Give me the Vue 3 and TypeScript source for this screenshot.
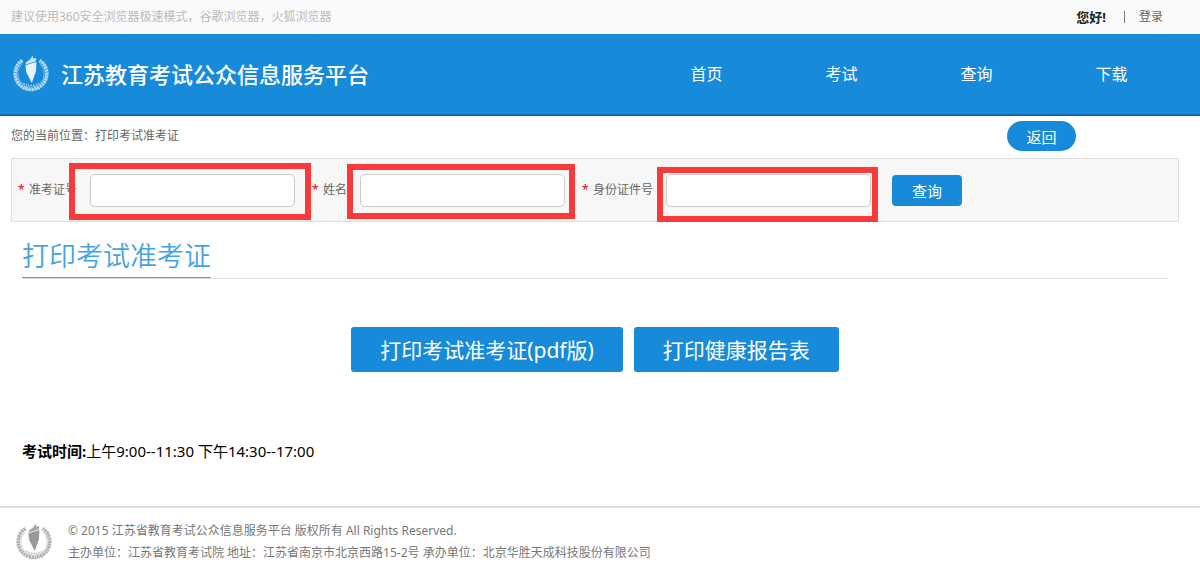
<script setup lang="ts">
import { reactive } from 'vue'

interface Field {
  id: 'ticket' | 'name' | 'idcard'
  label: string
}

const navItems: string[] = ['首页', '考试', '查询', '下载']

const fields: Field[] = [
  { id: 'ticket', label: '准考证号' },
  { id: 'name', label: '姓名' },
  { id: 'idcard', label: '身份证件号' },
]

const form = reactive({ ticket: '', name: '', idcard: '' })
</script>

<template>
  <div class="page">
    <svg class="defs" aria-hidden="true">
      <symbol id="emblem" viewBox="0 0 36 38">
        <g fill="none" stroke="currentColor">
          <path d="M9.4 5.4A15.8 15.8 0 1 0 26.6 5.4" stroke-width="3.6" stroke-dasharray="2.4 0.5" opacity="0.75" />
          <path d="M9.6 8.8A13.2 13.2 0 1 0 26.4 8.8" stroke-width="0.8" opacity="0.6" />
          <path d="M10.5 28.3Q18 32.6 25.5 28.3" stroke-width="1.3" stroke-dasharray="1.2 1.3" opacity="0.8" />
        </g>
        <path d="M12.8 7.4L17 4.6L19.6 0.4L20.2 3.4L23.4 3L22.6 6.6L12.8 9.6Z" fill="currentColor" opacity="0.85" />
        <path d="M12.4 10.2L23.4 7L23 16L18.8 28L13.2 17Z" fill="currentColor" />
        <path d="M14.6 12.4L16.4 16.2L17.6 22" fill="none" stroke="currentColor" stroke-width="0.6" opacity="0.5" />
      </symbol>
    </svg>

    <div class="topbar">
      <span class="notice">建议使用360安全浏览器极速模式，谷歌浏览器，火狐浏览器</span>
      <div class="account">
        <strong>您好!</strong>
        <span class="divider"></span>
        <a href="#">登录</a>
      </div>
    </div>

    <header class="header">
      <a class="brand" href="#">
        <svg class="emblem"><use href="#emblem" /></svg>
        <span>江苏教育考试公众信息服务平台</span>
      </a>
      <nav class="nav">
        <a v-for="item in navItems" :key="item" href="#">{{ item }}</a>
      </nav>
    </header>

    <main>
      <div class="location">
        <span>您的当前位置：打印考试准考证</span>
        <button type="button" class="back">返回</button>
      </div>

      <form class="search" @submit.prevent>
        <div v-for="field in fields" :key="field.id" class="field">
          <label :for="field.id"><span class="required">*</span>{{ field.label }}</label>
          <div class="control">
            <input :id="field.id" v-model="form[field.id]" type="text" />
            <span class="mark" :class="`mark-${field.id}`"></span>
          </div>
        </div>
        <button type="submit" class="query">查询</button>
      </form>

      <section class="content">
        <div class="heading">
          <h1>打印考试准考证</h1>
        </div>
        <div class="actions">
          <button type="button">打印考试准考证(pdf版)</button>
          <button type="button">打印健康报告表</button>
        </div>
        <p class="time"><strong>考试时间:</strong>上午9:00--11:30 下午14:30--17:00</p>
      </section>
    </main>

    <footer class="footer">
      <svg class="emblem"><use href="#emblem" /></svg>
      <div>
        <p>© 2015 江苏省教育考试公众信息服务平台 版权所有 All Rights Reserved.</p>
        <p>主办单位：江苏省教育考试院 地址：江苏省南京市北京西路15-2号 承办单位：北京华胜天成科技股份有限公司</p>
      </div>
    </footer>
  </div>
</template>

<style>
body {
  margin: 0;
  background: #fff;
}
</style>

<style scoped>
.page {
  font-family: "Noto Sans", "Noto Sans CJK SC", sans-serif;
  font-size: 12px;
  line-height: 22px;
  color: #666;
}
.page * {
  box-sizing: border-box;
}
.page button,
.page input {
  font-family: inherit;
}
.defs {
  display: block;
  width: 0;
  height: 0;
}
a {
  color: inherit;
  text-decoration: none;
}
p,
h1 {
  margin: 0;
}
.topbar {
  display: flex;
  align-items: center;
  justify-content: space-between;
  height: 34px;
  padding: 0 37px 0 11px;
  background: #fafafa;
}
.notice {
  color: #bbb;
}
.account {
  display: flex;
  align-items: center;
}
.account strong {
  color: #222;
  font-size: 13px;
}
.divider {
  width: 1px;
  height: 12px;
  margin: 0 14px 0 18px;
  background: #777;
}
.emblem {
  flex: none;
  width: 36px;
  height: 38px;
}
.header {
  display: flex;
  justify-content: space-between;
  height: 82px;
  padding: 0 21px 0 13px;
  background: #178bd9;
  border-bottom: 2px solid #0b6ab3;
  color: #fff;
}
.brand {
  display: flex;
  align-items: center;
  gap: 12px;
  font-size: 22px;
  font-weight: 500;
}
.brand .emblem {
  color: #e6f4ff;
}
.nav {
  display: flex;
  align-items: center;
  font-size: 16px;
}
.nav a {
  width: 135px;
  text-align: center;
}
.location {
  display: flex;
  align-items: center;
  justify-content: space-between;
  height: 42px;
  padding: 0 124px 2px 11px;
}
.back {
  width: 69px;
  height: 30px;
  padding: 0;
  border: 0;
  border-radius: 15px;
  background: #178bd9;
  color: #fff;
  font-size: 15px;
}
.search {
  display: flex;
  align-items: center;
  gap: 17px;
  height: 64px;
  margin: 0 21px 0 11px;
  padding: 0 6px;
  border: 1px solid #ddd;
  background: #f7f7f7;
}
.field {
  display: flex;
  align-items: center;
  gap: 13px;
}
.field label {
  display: flex;
  white-space: nowrap;
}
.required {
  width: 11px;
  color: #e60012;
}
.control {
  position: relative;
}
.control input {
  display: block;
  width: 205px;
  height: 33px;
  padding: 0 8px;
  border: 1px solid #ccc;
  border-radius: 5px;
  background: #fff;
  font-size: 12px;
}
.mark {
  position: absolute;
  border: 6px solid #fa3a3a;
  pointer-events: none;
}
.mark-ticket {
  inset: -11px -16px -13px -21px;
}
.mark-name {
  inset: -10px -10px -12px -13px;
}
.mark-idcard {
  inset: -7px -7px -15px -9px;
}
.query {
  width: 70px;
  height: 31px;
  margin-left: 4px;
  padding: 0;
  border: 0;
  border-radius: 4px;
  background: #178bd9;
  color: #fff;
  font-size: 15px;
}
.content {
  padding: 12px 32px 0 22px;
}
.heading {
  display: flex;
  border-bottom: 1px solid #ddd;
}
.heading h1 {
  border-bottom: 1px solid #45a3e2;
  color: #45a3e2;
  font-size: 27px;
  font-weight: 350;
  line-height: 43px;
}
.actions {
  display: flex;
  justify-content: center;
  gap: 11px;
  margin-top: 48px;
}
.actions button {
  height: 45px;
  padding: 0 29px 2px;
  border: 0;
  border-radius: 3px;
  background: #178bd9;
  color: #fff;
  font-size: 21px;
}
.time {
  margin-top: 68px;
  color: #000;
  font-size: 15px;
}
.footer {
  display: flex;
  align-items: center;
  gap: 16px;
  margin-top: 44px;
  padding: 12px 16px;
  border-top: 2px solid #ddd;
  color: #777;
}
.footer .emblem {
  color: #999;
}
</style>
